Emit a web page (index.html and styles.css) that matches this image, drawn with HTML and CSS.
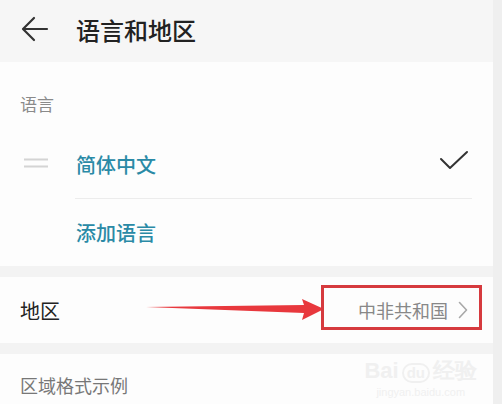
FILE: index.html
```html
<!DOCTYPE html>
<html>
<head>
    <title>语言和地区</title>
    <link rel="stylesheet" href="styles.css">
</head>

<body>
    <div class="screen">
        <!-- Top bar with back arrow and page title -->
        <div class="topbar">
            <svg class="back" width="28" height="28" viewBox="0 0 28 28">
                <path d="M26 14 H3 M13 3 L2 14 L13 25" fill="none" stroke="#333" stroke-width="2.2" stroke-linecap="round" stroke-linejoin="round"/>
            </svg>
            <span class="title">语言和地区</span>
        </div>

        <!-- Language list -->
        <div class="card lang-card">
            <div class="section-label">语言</div>
            <div class="row lang-row">
                <svg class="handle" width="26" height="10" viewBox="0 0 26 10">
                    <path d="M1 1.5 H25 M1 8.5 H25" stroke="#d4d4d4" stroke-width="2"/>
                </svg>
                <span class="link">简体中文</span>
                <svg class="check" width="30" height="22" viewBox="0 0 30 22">
                    <path d="M2 9 L11 18 L28 2" fill="none" stroke="#333" stroke-width="2" stroke-linecap="round" stroke-linejoin="round"/>
                </svg>
            </div>
            <div class="divider"></div>
            <div class="row add-row">
                <span class="link">添加语言</span>
            </div>
        </div>

        <!-- Region row -->
        <div class="card region-card">
            <span class="row-title">地区</span>
            <span class="region-value">中非共和国</span>
            <svg class="chevron" width="10" height="18" viewBox="0 0 10 18">
                <path d="M1.5 1.5 L8.5 9 L1.5 16.5" fill="none" stroke="#a8a8a8" stroke-width="1.6" stroke-linecap="round" stroke-linejoin="round"/>
            </svg>
            <!-- Annotation drawn over the screenshot -->
            <svg class="arrow" width="180" height="30" viewBox="0 0 180 30">
                <polygon points="0,10 158,8 156,2 178,12 156,23 158,16" fill="#e8383d"/>
            </svg>
            <div class="highlight"></div>
        </div>

        <!-- Region format sample -->
        <div class="card format-card">
            <span class="section-title">区域格式示例</span>
            <div class="watermark">
                <span class="wm-logo">Bai<span class="wm-paw">du</span>经验</span>
                <span class="wm-url">jingyan.baidu.com</span>
            </div>
        </div>
    </div>
</body>
</html>
```

FILE: styles.css
```css
body {
    margin: 0;
    background-color: #efefef;
    font-family: "Noto Sans CJK SC", "Noto Sans", sans-serif;
    overflow: hidden;
}

.screen {
    width: 493px;
    height: 404px;
    background-color: #f3f3f3;
}

.topbar {
    height: 62px;
    background-color: #f6f6f6;
    display: flex;
    align-items: center;
}

.back {
    margin-left: 21px;
    margin-top: -4px;
}

.title {
    margin-left: 27px;
    font-size: 24px;
    font-weight: 500;
    color: #222;
    margin-top: -4px;
}

.card {
    background-color: #fdfdfd;
}

.lang-card {
    height: 204px;
}

.section-label {
    padding: 31px 0 0 20px;
    height: 37px;
    font-size: 17px;
    line-height: 22px;
    color: #8a8a8a;
}

.row {
    display: flex;
    align-items: center;
}

.lang-row {
    height: 68px;
}

.handle {
    margin-left: 23px;
    margin-top: -3px;
}

.link {
    font-size: 20px;
    font-weight: 500;
    color: #2a8aa6;
}

.lang-row .link {
    margin-left: 27px;
}

.check {
    margin-left: auto;
    margin-right: 24px;
    margin-top: -6px;
}

.divider {
    height: 1px;
    margin: 0 21px 0 75px;
    background-color: #ececec;
}

.add-row {
    height: 67px;
    padding-left: 76px;
}

.region-card {
    position: relative;
    margin-top: 11px;
    height: 66px;
    display: flex;
    align-items: center;
}

.row-title {
    margin-left: 20px;
    font-size: 20px;
    color: #222;
}

.region-value {
    margin-left: auto;
    font-size: 18px;
    color: #888;
}

.chevron {
    margin: 0 25px 0 10px;
}

.arrow {
    position: absolute;
    left: 146px;
    top: 20px;
}

.highlight {
    position: absolute;
    left: 321px;
    top: 8px;
    width: 155px;
    height: 39px;
    border: 3px solid #d63a3e;
}

.format-card {
    position: relative;
    margin-top: 11px;
    height: 50px;
    padding: 18px 0 0 20px;
}

.section-title {
    font-size: 18px;
    color: #777;
}

.watermark {
    position: absolute;
    right: 16px;
    top: 4px;
    display: flex;
    flex-direction: column;
    align-items: center;
    color: #f0f0f0;
}

.wm-logo {
    font-family: "Liberation Sans", sans-serif;
    font-size: 22px;
    font-weight: bold;
    line-height: 26px;
}

.wm-paw {
    display: inline-block;
    margin: 0 3px;
    padding: 0 3px;
    border: 2px solid #f0f0f0;
    border-radius: 10px;
    font-size: 15px;
    line-height: 16px;
}

.wm-url {
    font-family: "Liberation Sans", sans-serif;
    font-size: 11px;
    line-height: 16px;
}
```
